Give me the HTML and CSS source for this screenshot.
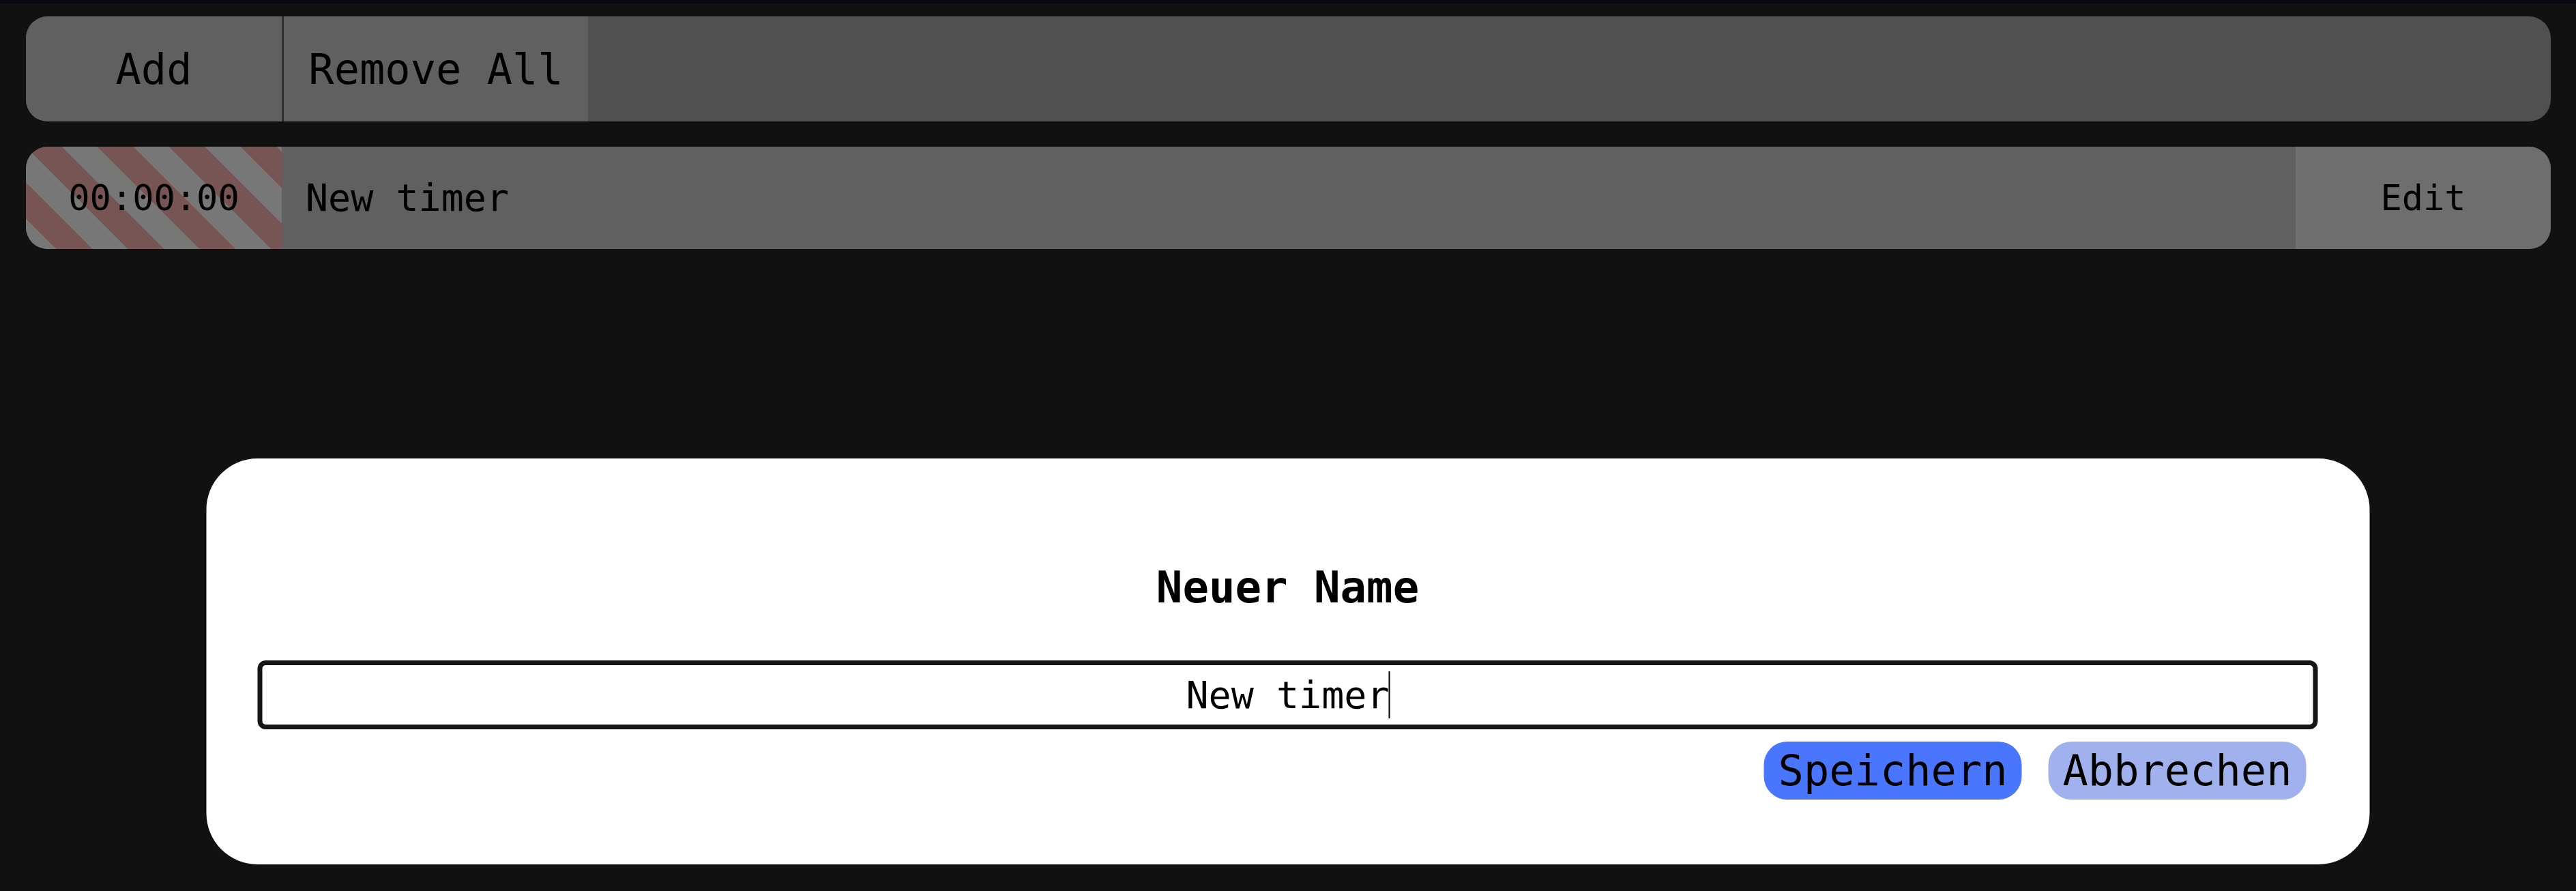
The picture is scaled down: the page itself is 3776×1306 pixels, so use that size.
FILE: index.html
```html
<!DOCTYPE html>
<html lang="de">
<head>
<meta charset="utf-8">
<title>Timer</title>
<link rel="stylesheet" href="styles.css">
</head>
<body>
<header class="strip"></header>
<main class="page">
  <nav class="toolbar">
    <button class="tool tool-add">Add</button>
    <button class="tool tool-remove">Remove All</button>
  </nav>
  <section class="timers">
    <div class="timer">
      <div class="timer-time">00:00:00</div>
      <div class="timer-name">New timer</div>
      <button class="timer-edit">Edit</button>
    </div>
  </section>
</main>
<div class="dialog" role="dialog" aria-labelledby="dlg-title">
  <h2 class="dialog-title" id="dlg-title">Neuer Name</h2>
  <div class="field">
    <input class="dialog-input" type="text" value="New timer">
    <span class="caret"></span>
  </div>
  <div class="dialog-actions">
    <button class="btn btn-save">Speichern</button>
    <button class="btn btn-cancel">Abbrechen</button>
  </div>
</div>
</body>
</html>
```

FILE: styles.css
```css
html, body {
  margin: 0;
  padding: 0;
  background: #111111;
  height: 100%;
  overflow: hidden;
}
body {
  font-family: "DejaVu Sans Mono", "Liberation Mono", monospace;
  color: #000;
}
.strip {
  height: 5px;
  background: #08080f;
}
.page {
  padding: 19px 37px 0 38px;
  display: flex;
  flex-direction: column;
  gap: 37px;
}
.toolbar {
  display: flex;
  height: 154px;
  background: #505050;
  border-radius: 32px;
  overflow: hidden;
}
.tool {
  font-family: inherit;
  font-size: 62px;
  color: #000;
  background: #606060;
  border: none;
  padding: 0;
  margin: 0;
}
.tool-add {
  width: 378px;
  border-right: 3px solid #2f2f2f;
}
.tool-remove {
  width: 446px;
}
.timer {
  display: flex;
  height: 150px;
  background: #606060;
  border-radius: 32px;
  overflow: hidden;
}
.timer-time {
  width: 375px;
  display: flex;
  align-items: center;
  justify-content: center;
  font-size: 52px;
  background: repeating-linear-gradient(45deg, #777777 0 31.8px, #775555 31.8px 69px, #777777 69px 74.25px);
}
.timer-name {
  flex: 1;
  display: flex;
  align-items: center;
  padding-left: 35px;
  font-size: 55px;
}
.timer-edit {
  width: 374px;
  font-family: inherit;
  font-size: 52px;
  color: #000;
  background: #6e6e6e;
  border: none;
  padding: 0;
}
.dialog {
  position: fixed;
  left: 50%;
  bottom: 39px;
  transform: translateX(-50%);
  width: 3171px;
  box-sizing: border-box;
  background: #ffffff;
  border-radius: 75px;
  padding: 152px 76px 95px 75px;
  display: flex;
  flex-direction: column;
}
.dialog-title {
  margin: 0 0 70px;
  text-align: center;
  font-size: 64px;
  font-weight: bold;
  line-height: normal;
}
.field {
  position: relative;
  display: flex;
}
.dialog-input {
  flex: 1;
  height: 101px;
  box-sizing: border-box;
  border: 7px solid #151515;
  border-radius: 12px;
  outline: none;
  font-family: inherit;
  font-size: 55px;
  text-align: center;
  color: #000;
  padding: 0 10px;
  margin: 0;
}
.caret {
  position: absolute;
  left: calc(50% + 148px);
  top: 16px;
  width: 2px;
  height: 69px;
  background: #000;
}
.dialog-actions {
  display: flex;
  justify-content: flex-end;
  gap: 39px;
  padding-right: 17px;
  margin-top: 18px;
}
.btn {
  font-family: inherit;
  font-size: 62px;
  color: #000;
  border: none;
  border-radius: 34px;
  height: 85px;
  padding: 0 21px;
  line-height: 1;
}
.btn-save {
  background: #4a76fd;
}
.btn-cancel {
  background: #a0b1ee;
}
```
